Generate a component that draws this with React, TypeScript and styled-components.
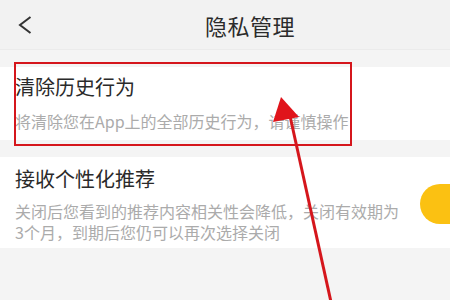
import styled, { createGlobalStyle } from "styled-components";

const GlobalStyle = createGlobalStyle`
  html, body {
    margin: 0;
    padding: 0;
    background: #f4f4f4;
  }
  body {
    font-family: "Noto Sans CJK SC", "Noto Sans", sans-serif;
  }
`;

const Screen = styled.div`
  position: relative;
  width: 450px;
  height: 300px;
  overflow: hidden;
  background: #f4f4f4;
`;

const Header = styled.header`
  display: flex;
  align-items: center;
  height: 50px;
  padding-left: 18px;
  background: #f2f2f2;
  border-bottom: 1px solid #ebebeb;
  box-sizing: border-box;
`;

const BackButton = styled.button`
  display: flex;
  padding: 0;
  border: none;
  background: none;
  cursor: pointer;
  color: #333;
`;

const Title = styled.h1`
  margin: 0 0 0 173px;
  font-size: 22px;
  font-weight: 400;
  color: #2b2b2b;
  letter-spacing: 0.5px;
`;

const List = styled.div`
  display: flex;
  flex-direction: column;
  gap: 17px;
  padding-top: 17px;
`;

const Card = styled.div<{ $top: number; $bottom: number }>`
  display: flex;
  align-items: center;
  justify-content: space-between;
  padding: ${(p) => p.$top}px 0 ${(p) => p.$bottom}px 15px;
  background: #fff;
  overflow: hidden;
`;

const Texts = styled.div`
  display: flex;
  flex-direction: column;
`;

const ItemTitle = styled.div`
  font-size: 20px;
  line-height: 28px;
  color: #2a2a2a;
`;

const ItemDesc = styled.div<{ $gap: number; $lh: number }>`
  margin-top: ${(p) => p.$gap}px;
  max-width: 388px;
  font-size: 16px;
  line-height: ${(p) => p.$lh}px;
  color: #ababab;
`;

const Toggle = styled.div`
  flex: none;
  width: 52px;
  height: 40px;
  margin-right: -22px;
  border-radius: 20px;
  background: #fbc112;
`;

const Highlight = styled.div`
  position: absolute;
  left: 14px;
  top: 62px;
  width: 338px;
  height: 84px;
  border: 2px solid #d5161c;
  box-sizing: border-box;
  pointer-events: none;
`;

const Overlay = styled.svg`
  position: absolute;
  inset: 0;
  pointer-events: none;
`;

const ChevronLeft = () => (
  <svg width="14" height="18" viewBox="0 0 14 18" fill="none">
    <path d="M12.5 1 L2 9 L12.5 17" stroke="currentColor" strokeWidth="2" />
  </svg>
);

const App = () => {
  return (
    <Screen>
      <GlobalStyle />
      <Header>
        <BackButton aria-label="返回">
          <ChevronLeft />
        </BackButton>
        <Title>隐私管理</Title>
      </Header>
      <List>
        <Card $top={6} $bottom={8}>
          <Texts>
            <ItemTitle>清除历史行为</ItemTitle>
            <ItemDesc $gap={9} $lh={22}>
              将清除您在App上的全部历史行为，请谨慎操作
            </ItemDesc>
          </Texts>
        </Card>
        <Card $top={8} $bottom={5}>
          <Texts>
            <ItemTitle>接收个性化推荐</ItemTitle>
            <ItemDesc $gap={8} $lh={21}>
              关闭后您看到的推荐内容相关性会降低，关闭有效期为3个月，到期后您仍可以再次选择关闭
            </ItemDesc>
          </Texts>
          <Toggle />
        </Card>
      </List>
      <Highlight />
      <Overlay width="450" height="300" viewBox="0 0 450 300">
        <line x1="290" y1="116" x2="331" y2="302" stroke="#d5161c" strokeWidth="3" />
        <polygon points="281,97 273,122 299,117" fill="#e0141b" />
      </Overlay>
    </Screen>
  );
};

export default App;
